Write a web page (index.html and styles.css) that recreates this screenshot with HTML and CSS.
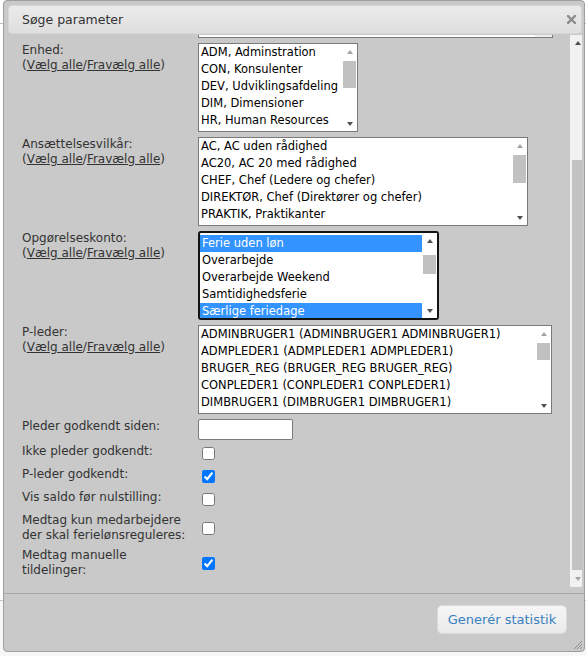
FILE: index.html
```html
<!DOCTYPE html>
<html lang="da">
<head>
<meta charset="utf-8">
<title>Søge parameter</title>
<link rel="stylesheet" href="styles.css">
</head>
<body>
<div class="backdrop">
  <div class="bg-head"></div>
  <div class="bg-foot"></div>
</div>

<div class="dialog">
  <div class="titlebar">
    <span class="title">Søge parameter</span>
    <svg class="close" width="9" height="9" viewBox="0 0 9 9"><path d="M1 1L8 8M8 1L1 8" stroke="#8c8c8c" stroke-width="2.4" stroke-linecap="square"/></svg>
  </div>

  <div class="body">
    <div class="content">
      <div class="stub"></div>

      <div class="lrow">
        <div class="lbl">Enhed:<br>(<a href="#">Vælg alle</a>/<a href="#">Fravælg alle</a>)</div>
        <div class="listbox w-enhed">
          <div class="opts">
            <div class="opt">ADM, Adminstration</div>
            <div class="opt">CON, Konsulenter</div>
            <div class="opt">DEV, Udviklingsafdeling</div>
            <div class="opt">DIM, Dimensioner</div>
            <div class="opt">HR, Human Resources</div>
          </div>
          <div class="lsb">
            <span class="la"><i class="tri-up dis"></i></span>
            <span class="lt"><b class="lthumb" style="margin-top:2px;height:27px"></b></span>
            <span class="la"><i class="tri-down"></i></span>
          </div>
        </div>
      </div>

      <div class="lrow">
        <div class="lbl">Ansættelsesvilkår:<br>(<a href="#">Vælg alle</a>/<a href="#">Fravælg alle</a>)</div>
        <div class="listbox w-ans">
          <div class="opts">
            <div class="opt">AC, AC uden rådighed</div>
            <div class="opt">AC20, AC 20 med rådighed</div>
            <div class="opt">CHEF, Chef (Ledere og chefer)</div>
            <div class="opt">DIREKTØR, Chef (Direktører og chefer)</div>
            <div class="opt">PRAKTIK, Praktikanter</div>
          </div>
          <div class="lsb">
            <span class="la"><i class="tri-up dis"></i></span>
            <span class="lt"><b class="lthumb" style="margin-top:2px;height:28px"></b></span>
            <span class="la"><i class="tri-down"></i></span>
          </div>
        </div>
      </div>

      <div class="lrow">
        <div class="lbl">Opgørelseskonto:<br>(<a href="#">Vælg alle</a>/<a href="#">Fravælg alle</a>)</div>
        <div class="listbox focus w-opg">
          <div class="opts">
            <div class="opt sel">Ferie uden løn</div>
            <div class="opt">Overarbejde</div>
            <div class="opt">Overarbejde Weekend</div>
            <div class="opt">Samtidighedsferie</div>
            <div class="opt sel">Særlige feriedage</div>
          </div>
          <div class="lsb">
            <span class="la"><i class="tri-up"></i></span>
            <span class="lt"><b class="lthumb" style="margin-top:7px;height:19px"></b></span>
            <span class="la"><i class="tri-down"></i></span>
          </div>
        </div>
      </div>

      <div class="lrow">
        <div class="lbl">P-leder:<br>(<a href="#">Vælg alle</a>/<a href="#">Fravælg alle</a>)</div>
        <div class="listbox w-pl">
          <div class="opts">
            <div class="opt">ADMINBRUGER1 (ADMINBRUGER1 ADMINBRUGER1)</div>
            <div class="opt">ADMPLEDER1 (ADMPLEDER1 ADMPLEDER1)</div>
            <div class="opt">BRUGER_REG (BRUGER_REG BRUGER_REG)</div>
            <div class="opt">CONPLEDER1 (CONPLEDER1 CONPLEDER1)</div>
            <div class="opt">DIMBRUGER1 (DIMBRUGER1 DIMBRUGER1)</div>
          </div>
          <div class="lsb">
            <span class="la"><i class="tri-up dis"></i></span>
            <span class="lt"><b class="lthumb" style="margin-top:2px;height:17px"></b></span>
            <span class="la"><i class="tri-down"></i></span>
          </div>
        </div>
      </div>

      <div class="irow">
        <label class="lbl" for="since">Pleder godkendt siden:</label>
        <input class="txt" id="since" type="text">
      </div>

      <div class="crow first">
        <div class="lbl">Ikke pleder godkendt:</div>
        <input class="cb" type="checkbox">
      </div>
      <div class="crow">
        <div class="lbl">P-leder godkendt:</div>
        <input class="cb" type="checkbox" checked>
      </div>
      <div class="crow">
        <div class="lbl">Vis saldo før nulstilling:</div>
        <input class="cb" type="checkbox">
      </div>
      <div class="crow two">
        <div class="lbl">Medtag kun medarbejdere<br>der skal ferielønsreguleres:</div>
        <input class="cb" type="checkbox">
      </div>
      <div class="crow two">
        <div class="lbl">Medtag manuelle<br>tildelinger:</div>
        <input class="cb" type="checkbox" checked>
      </div>
    </div>

    <div class="vscroll">
      <span class="va"><i class="tri-up"></i></span>
      <span class="vt"><b class="vthumb"></b></span>
      <span class="va"><i class="tri-down dis"></i></span>
    </div>
  </div>

  <div class="footer">
    <button class="btn" type="button">Generér statistik</button>
  </div>

  <svg class="grip" width="10" height="10" viewBox="0 0 10 10"><path d="M9 1L1 9M9 4L4 9M9 7L7 9" stroke="#8e8e8e" stroke-width="1"/></svg>
</div>
</body>
</html>
```

FILE: styles.css
```css
* { box-sizing: border-box; }

html, body {
  margin: 0;
  height: 100%;
}

body {
  position: relative;
  overflow: hidden;
  background: #ffffff;
  font-family: "DejaVu Sans", Verdana, sans-serif;
  font-size: 12px;
  color: #333333;
}

/* page behind the dialog */
.backdrop {
  height: 656px;
  display: flex;
  flex-direction: column;
}
.bg-head {
  height: 24px;
  border-bottom: 1px solid #bdbdbd;
}
.bg-foot {
  margin-top: 576px;
  border-top: 1px solid #c4c4c4;
  flex: 1;
  background: #f7f7f7;
}

/* dialog */
.dialog {
  position: absolute;
  left: 3px;
  top: 0;
  width: 582px;
  height: 652px;
  border: 1px solid #9f9f9f;
  border-radius: 4px;
  background: #c9c9c9;
  display: flex;
  flex-direction: column;
}

.titlebar {
  margin: 4px 2px 0 4px;
  height: 29px;
  flex: none;
  border: 1px solid #d6d6d6;
  border-radius: 4px;
  background: linear-gradient(#ebebeb, #dedede);
  display: flex;
  align-items: center;
  justify-content: space-between;
  padding: 0 5px 0 13px;
}
.title {
  font-size: 12.5px;
  color: #333333;
}
.close { display: block; }

.body {
  display: flex;
  height: 552px;
  flex: none;
  margin-top: 1px;
}

.content {
  flex: 1;
  overflow: hidden;
  padding-left: 18px;
}

/* clipped list from rows scrolled away above */
.stub {
  margin-left: 176px;
  width: 355px;
  height: 3px;
  border: 1px solid #7a7a7a;
  border-top: 0;
  background: linear-gradient(to right, #ffffff 0 336px, #eeeeee 336px);
}

.lbl {
  width: 176px;
  flex: none;
  line-height: 15px;
}
.lbl a {
  color: #333333;
  text-decoration: underline;
}

.lrow {
  display: flex;
  align-items: flex-start;
  margin-top: 5px;
}

.listbox {
  height: 89px;
  border: 1px solid #7a7a7a;
  background: #ffffff;
  display: flex;
  flex: none;
}
.listbox.focus {
  border: 2px solid #141414;
  border-radius: 3px;
}
.w-enhed { width: 160px; }
.w-ans { width: 330px; }
.w-opg { width: 241px; }
.w-pl { width: 354px; }

.opts {
  flex: 1;
  overflow: hidden;
  white-space: nowrap;
  color: #000000;
  font-size: 11.5px;
  line-height: 17px;
}
.focus .opts { padding-top: 2px; }
.opt { padding-left: 2px; }
.opt.sel {
  background: #3394ff;
  color: #ffffff;
}

.lsb {
  width: 15px;
  flex: none;
  display: flex;
  flex-direction: column;
  background: #ffffff;
}
.la {
  height: 15px;
  flex: none;
  display: flex;
  align-items: center;
  justify-content: center;
}
.lt { flex: 1; }
.lthumb {
  display: block;
  margin-left: 1px;
  margin-right: 1px;
  background: #c1c1c1;
}

.tri-up, .tri-down {
  display: block;
  width: 0;
  height: 0;
  border-left: 3.5px solid transparent;
  border-right: 3.5px solid transparent;
}
.tri-up { border-bottom: 4px solid #505050; }
.tri-down { border-top: 4px solid #505050; }
.tri-up.dis { border-bottom-color: #a3a3a3; }
.tri-down.dis { border-top-color: #a3a3a3; }

/* text input row */
.irow {
  display: flex;
  align-items: flex-start;
  margin-top: 5px;
}
.txt {
  width: 95px;
  height: 21px;
  margin: 0;
  padding: 0 2px;
  border: 1px solid #7a7a7a;
  border-radius: 2px;
  background: #ffffff;
  font: inherit;
}

/* checkbox rows */
.crow {
  display: flex;
  align-items: center;
  min-height: 23px;
}
.crow.first { margin-top: 4px; }
.crow.two { min-height: 35px; }
.crow .lbl { align-self: flex-start; }
.cb {
  width: 13px;
  height: 13px;
  margin: 0 0 4px 4px;
  accent-color: #0075ff;
}

/* main vertical scrollbar of the dialog content */
.vscroll {
  width: 12px;
  flex: none;
  margin-right: 2px;
  background: #f1f1f1;
  display: flex;
  flex-direction: column;
}
.va {
  height: 16px;
  flex: none;
  display: flex;
  align-items: center;
  justify-content: center;
  padding-left: 3px;
}
.vt { flex: 1; }
.vthumb {
  display: block;
  margin: 109px 0 0 2px;
  height: 410px;
  background: #c2c2c2;
}

/* footer */
.footer {
  flex: none;
  margin-top: 6px;
  border-top: 1px solid #a8a8a8;
  padding: 11px 17px 0 0;
  display: flex;
  justify-content: flex-end;
}
.btn {
  width: 130px;
  height: 29px;
  margin: 0;
  padding: 0;
  border: 1px solid #dadada;
  border-radius: 5px;
  background: linear-gradient(#f6f6f6, #eaeaea);
  color: #3a80c0;
  font-family: "DejaVu Sans", Verdana, sans-serif;
  font-size: 13px;
}

.grip {
  position: absolute;
  right: 1px;
  bottom: 1px;
}
```
